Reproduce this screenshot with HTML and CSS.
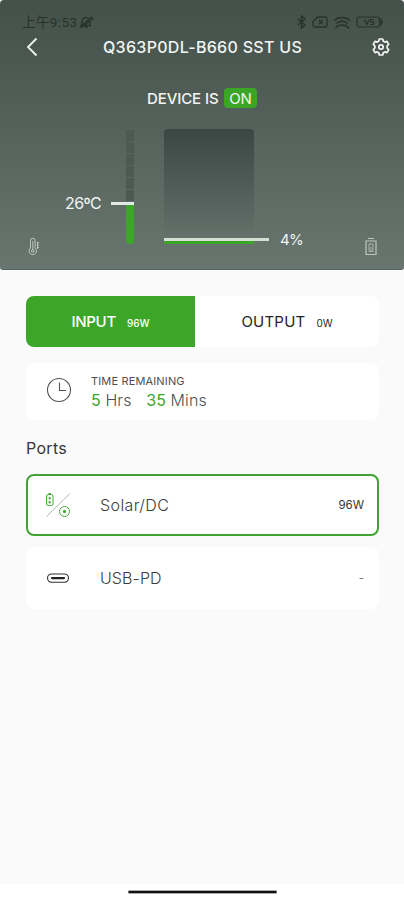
FILE: index.html
```
<!DOCTYPE html>
<html lang="en">
<head>
<meta charset="utf-8">
<meta name="viewport" content="width=device-width, initial-scale=1">
<title>Power station</title>
<link rel="stylesheet" href="styles.css">
</head>
<body>
<div class="app">
  <header class="hero">
    <div class="status">
      <span class="clock">上午9:53</span>
      <svg class="mute" width="17" height="14" viewBox="0 0 17 14" fill="none" stroke="currentColor" stroke-width="1.3"><path d="M2 10.5h11M4 10V6a4 4 0 0 1 7-2M12 6.500v4M7 12.200h3M2 12.500L14 1.500M4 12.500L15.500 3"/></svg>
      <div class="status-icons">
        <svg width="10" height="14" viewBox="0 0 10 14" fill="none" stroke="currentColor" stroke-width="1.4"><path d="M1 4l7 6-3.500 3V1L8 4l-7 6"/></svg>
        <svg width="16" height="12" viewBox="0 0 16 12" fill="none" stroke="currentColor" stroke-width="1.300"><path d="M5.500 1H13a2 2 0 0 1 2 2v6a2 2 0 0 1-2 2H3a2 2 0 0 1-2-2V5.500z"/><path d="M7 4l3.500 4M10.500 4L7 8"/></svg>
        <svg class="wifi" width="18" height="13" viewBox="0 0 18 13" fill="none" stroke="currentColor" stroke-width="1.500"><path d="M1 4.500c4.500-4 11.500-4 16 0M3.500 7.500c3.500-3 7.500-3 11 0M6 10.200c2-1.700 4-1.700 6 0M2.500 12l3-3M12 8.500l4 4"/></svg>
        <svg width="27" height="12" viewBox="0 0 27 12" fill="none" stroke="currentColor" stroke-width="1.200"><rect x="1" y="1" width="22.500" height="10" rx="2.500"/><path d="M25 3.500v5l1.500-2.500zM8 3.500l3 5 2-5M17.500 3.500h-3v2.300h3v2.700h-3"/></svg>
      </div>
    </div>
    <nav class="titlebar">
      <svg class="back" width="12" height="20" viewBox="0 0 12 20" fill="none" stroke="currentColor" stroke-width="1.800"><path d="M10.500 1.500L2 10l8.500 8.500"/></svg>
      <h1>Q363P0DL-B660 SST US</h1>
      <svg class="gear" width="18" height="18" viewBox="0 0 18 18" fill="none" stroke="currentColor" stroke-width="1.700" stroke-linejoin="round"><path d="M7.300 1h3.400l.6 2.200 1.500.9 2.200-.7 1.700 3-1.600 1.600v2l1.600 1.600-1.700 3-2.200-.7-1.500.9-.6 2.200H7.300l-.6-2.200-1.500-.9-2.200.7-1.700-3L2.900 10V8L1.300 6.400l1.700-3 2.200.7 1.500-.9z"/><circle cx="9" cy="9" r="2.200"/></svg>
    </nav>
    <div class="device"><span>DEVICE IS</span><b>ON</b></div>
    <div class="gauges">
      <span class="temp">26ºC</span>
      <div class="thermo"><i></i><i></i><i></i><i></i><i></i><i></i><em></em><u></u></div>
      <div class="tank"><em></em><u></u></div>
      <span class="charge">4%</span>
    </div>
    <div class="hero-foot">
      <svg width="12" height="19" viewBox="0 0 12 19" fill="none" stroke="currentColor" stroke-width="1"><path d="M2.500 11V3.500a2.300 2.300 0 0 1 4.600 0V11a3.700 3.700 0 1 1-4.600 0z"/><path d="M4.800 4v9M9.500 5v7M11 5.500H9.500M11 8H9.500M11 10.500H9.500"/><circle cx="4.800" cy="14" r="1.300"/></svg>
      <svg width="12" height="19" viewBox="0 0 12 19" fill="none" stroke="currentColor" stroke-width="1.200"><path d="M3 1.500h6M1 4h10v13.500H1z"/><path d="M4 7h4v7.500H4zM6 10v4" stroke-width=".8"/></svg>
    </div>
  </header>

  <main>
    <div class="tabs">
      <div class="tab active"><span>INPUT</span><small>96W</small></div>
      <div class="tab"><span>OUTPUT</span><small>0W</small></div>
    </div>
    <section class="card remaining">
      <svg width="26" height="26" viewBox="0 0 26 26" fill="none" stroke="currentColor" stroke-width="1.100"><circle cx="13" cy="13" r="11.500"/><path d="M13.500 5.500v8h6.500"/></svg>
      <div>
        <p class="label">TIME REMAINING</p>
        <p class="time"><b>5</b> Hrs <b class="mins">35</b> Mins</p>
      </div>
    </section>
    <h2>Ports</h2>
    <section class="card port selected">
      <svg width="26" height="26" viewBox="0 0 26 26" fill="none" stroke="#48aa3b" stroke-width="1"><path d="M1.500 24.500L25 1.500" stroke="#a6bda3"/><rect x="1.500" y="2.500" width="6.500" height="11" rx="1.500"/><path d="M3.500 1.500h2.500M4.700 5v2.500M4.700 9v2.500M3.500 6.200H6M3.500 10.200H6" stroke-width="1.200"/><circle cx="19.500" cy="19.500" r="5"/><circle cx="19.500" cy="19.500" r="1.200" fill="#2ea020"/></svg>
      <span class="name">Solar/DC</span><span class="watts">96W</span>
    </section>
    <section class="card port">
      <svg width="26" height="26" viewBox="0 0 26 26" fill="none" stroke="#333"><rect x="2.500" y="9" width="21" height="8.200" rx="4.100" stroke-width="1.100"/><path d="M7 13.100h12" stroke="#222" stroke-width="2.200" stroke-linecap="round"/></svg>
      <span class="name usb">USB-PD</span><span class="watts dash">-</span>
    </section>
  </main>
  <footer><i></i></footer>
</div>
</body>
</html>
```
FILE: styles.css
```
* { box-sizing: border-box; }
body { margin: 0; background: #fff; font-family: Inter, "Noto Sans CJK SC", sans-serif; }
h1, h2, p { margin: 0; }
i, em, u { display: block; text-decoration: none; }
svg { display: block; flex: none; }
.app { width: 404px; height: 900px; display: flex; flex-direction: column; background: #fafafa; }

.hero { height: 270px; padding-top: 14px; background: linear-gradient(#44514b, #4c5952 24%, #697670); color: #f2f5f3; border-bottom: 1px solid #59645e; border-radius: 4px 4px 3px 3px; }
.status { height: 16px; padding: 0 21px 0 22px; display: flex; align-items: center; color: #26322b; }
.clock { font: 400 13.5px/16px Roboto, "Noto Sans CJK SC", sans-serif; letter-spacing: .4px; }
.mute { margin-left: 1px; }
.status-icons { margin-left: auto; display: flex; align-items: center; gap: 5px; }

.titlebar { height: 34px; padding: 0 14px 0 26px; display: flex; align-items: center; }
h1 { font-size: 16px; line-height: 20px; font-weight: 500; letter-spacing: .3px; margin-left: 65px; }
.gear { margin-left: auto; }
.device { height: 20px; margin-top: 24px; padding-left: 147px; display: flex; align-items: center; gap: 6px; font-size: 15px; font-weight: 500; letter-spacing: -.1px; }
.device b { width: 33px; height: 20px; border-radius: 4px; background: #3ba526; text-align: center; line-height: 21px; font-weight: 400; }
.device span { width: 71px; white-space: nowrap; }

.gauges { height: 116px; margin-top: 21px; padding-left: 65px; display: flex; }
.temp { width: 61px; padding-top: 64px; font-size: 16px; line-height: 20px; letter-spacing: -.6px; }
.thermo { position: relative; width: 8px; height: 115px; padding-top: 1px; display: flex; flex-direction: column; gap: 1px; }
.thermo i { height: 11px; background: #4d5953; }
.thermo em { flex: 1; margin-top: 2px; background: #3ca629; border-radius: 0 0 3px 3px; }
.thermo u { position: absolute; left: -15px; top: 73px; width: 23px; height: 3px; background: #e3e9e4; }
.tank { position: relative; width: 90px; height: 115px; margin-left: 30px; border-radius: 4px 4px 0 0; background: linear-gradient(#3b4742, #66736d); }
.tank em { position: absolute; left: 0; bottom: 0; width: 90px; height: 4px; background: #3ba526; }
.tank u { position: absolute; left: 0; top: 109px; width: 105px; height: 3px; background: #d5dfd3; }
.charge { padding: 101px 0 0 26px; font-size: 15px; line-height: 20px; letter-spacing: -.6px; }
.hero-foot { margin-top: -8px; padding: 0 27px 0 28px; display: flex; justify-content: space-between; color: #bcc6c0; }

main { flex: 1; padding: 26px 25px 0 26px; color: #363636; }
.tabs { height: 51px; display: grid; grid-template-columns: 169px 1fr; border-radius: 8px; overflow: hidden; background: #fff; }
.tab { display: flex; align-items: center; justify-content: center; gap: 11px; font-size: 15px; font-weight: 400; color: #252525; letter-spacing: .2px; }
.tab small { font-size: 10px; font-weight: 400; padding-top: 3px; letter-spacing: 0; }
.active { color: #fff; background: #3ca629; font-weight: 500; letter-spacing: -.3px; }
.active small { font-weight: 500; }
.card { display: flex; align-items: center; background: #fff; border-radius: 8px; }
.remaining { height: 57px; margin-top: 16px; padding: 0 0 4px 20px; gap: 19px; color: #505050; }
.label { font-size: 11px; line-height: 16px; padding-top: 5px; letter-spacing: .15px; }
.time { font-size: 16px; line-height: 22px; font-weight: 300; letter-spacing: .1px; }
.time b { font-weight: 400; color: #3ca629; }
.mins { margin-left: 10px; }
h2 { margin-top: 17px; font-size: 16px; line-height: 22px; font-weight: 400; letter-spacing: .3px; }
.port { height: 62px; padding: 0 15px 0 19px; }
.selected { margin-top: 15px; margin-bottom: 11px; padding: 0 13px 0 17px; border: 2px solid #40a334; }
.name { margin-left: 29px; font-size: 16px; font-weight: 300; color: #3c3c3c; letter-spacing: .4px; }
.usb { letter-spacing: .1px; }
.watts { margin-left: auto; font-size: 11.5px; }
.dash { color: #777; }
footer { height: 16px; padding-top: 6px; background: #fff; }
footer i { width: 149px; height: 4px; margin-left: 128px; border-radius: 2px; border: solid #aaa; border-width: .5px 0; background: #111; }
```
